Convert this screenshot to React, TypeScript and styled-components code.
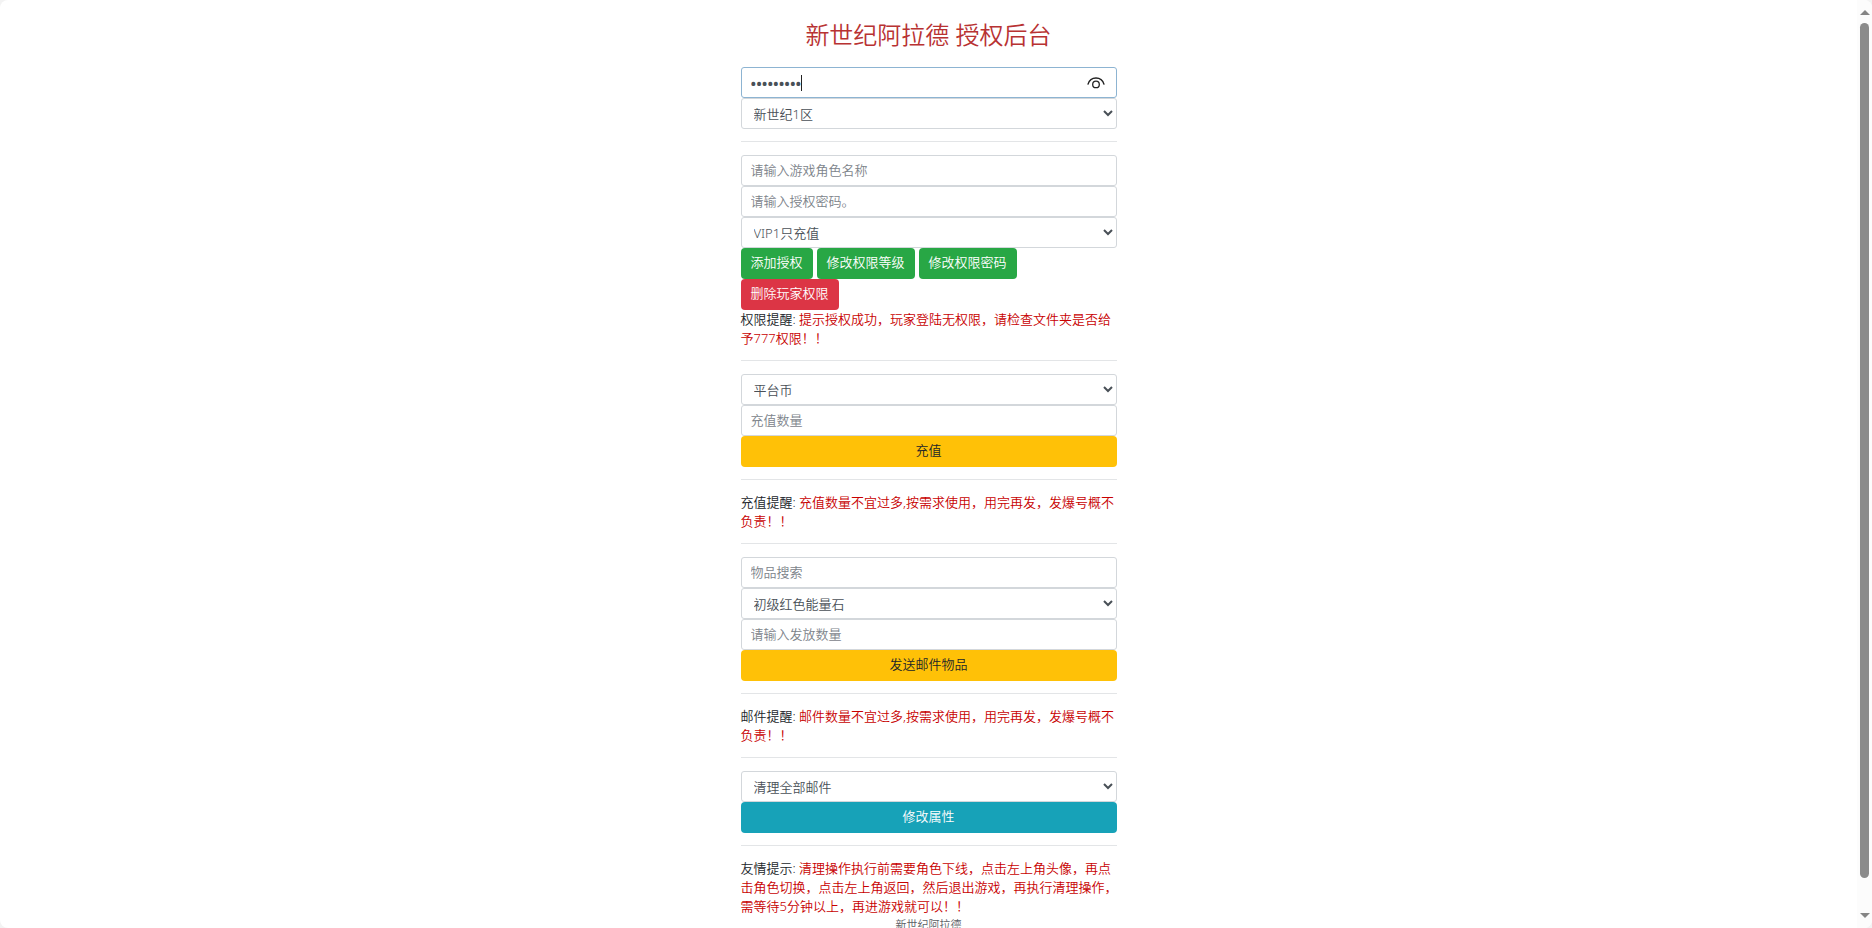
import React, { useState } from "react";
import styled, { createGlobalStyle, css } from "styled-components";

const GlobalStyle = createGlobalStyle`
  *, *::before, *::after { box-sizing: border-box; }
  body {
    margin: 0;
    background: #f3f3f3;
    color: #212529;
    font-family: "Noto Sans", "Noto Sans CJK SC", sans-serif;
    font-size: 13px;
    font-weight: 350;
    line-height: 19px;
  }
`;

const Window = styled.div`
  display: flex;
  height: 100vh;
  overflow: hidden;
  border-radius: 8px;
  background: #fff;
`;

const Scroller = styled.div`
  flex: 1;
  min-width: 0;
  overflow-y: auto;
  scrollbar-width: none;
`;

const Rail = styled.div`
  display: flex;
  flex-direction: column;
  align-items: center;
  justify-content: space-between;
  width: 15px;
  padding: 10px 0;
  background: #fcfcfc;
`;

const Thumb = styled.div`
  flex: 1;
  width: 9px;
  margin: 8px 0 35px;
  border-radius: 5px;
  background: #8b8b8b;
`;

const Page = styled.main`
  max-width: 376px;
  margin: 0 auto;
  padding-top: 16px;
`;

const Title = styled.h1`
  margin: 0 0 13px;
  color: #b83232;
  font-size: 24px;
  font-weight: 350;
  line-height: 38px;
  text-align: center;
`;

const Divider = styled.hr`
  height: 1px;
  margin: 12px 0 13px;
  border: 0;
  background: #e3e5e7;
`;

const control = css`
  display: block;
  width: 100%;
  height: 31px;
  margin: 0;
  border: 1px solid #d3d7db;
  border-radius: 3px;
  background: #fff;
  color: #495057;
  font: inherit;
  outline: none;
`;

const TextInput = styled.input`
  ${control}
  padding: 0 9px 2px;
  &::placeholder { color: #7c838a; opacity: 1; }
`;

const PasswordInput = styled(TextInput)`
  padding: 0 36px 0 9px;
  border-color: #8db4d2;
  font-size: 15px;
  font-weight: 600;
  caret-color: transparent;
`;

const Caret = styled.span`
  position: absolute;
  top: 8px;
  left: 60px;
  width: 1px;
  height: 16px;
  background: #222;
`;

const Select = styled.select`
  ${control}
  padding: 0 0 0 8px;
`;

const PasswordField = styled.div`
  position: relative;
`;

const RevealButton = styled.button`
  position: absolute;
  top: 5px;
  right: 10px;
  display: flex;
  align-items: center;
  justify-content: center;
  width: 22px;
  height: 21px;
  padding: 0;
  border: 0;
  background: none;
  color: #222;
`;

const tones = {
  success: ["#28a745", "#fff"],
  danger: ["#dc3545", "#fff"],
  warning: ["#ffc107", "#212529"],
  info: ["#17a2b8", "#fff"],
};

const Button = styled.button<{ $tone: keyof typeof tones; $block?: boolean }>`
  display: block;
  width: ${(p) => (p.$block ? "100%" : "auto")};
  height: 31px;
  padding: 0 10px 2px;
  border: 0;
  border-radius: 4px;
  background: ${(p) => tones[p.$tone][0]};
  color: ${(p) => tones[p.$tone][1]};
  font: inherit;
`;

const ButtonRow = styled.div`
  display: flex;
  flex-wrap: wrap;
  column-gap: 4px;
`;

const Note = styled.p`
  margin: 0 -4px 0 0;
`;

const Warning = styled.span`
  color: #c80000;
`;

const Footer = styled.footer`
  color: #5c6166;
  font-size: 11px;
  line-height: 17px;
  text-align: center;
`;

const EyeIcon = () => (
  <svg width="18" height="12" viewBox="0 0 18 12" fill="none" stroke="currentColor" strokeWidth="1.3" strokeLinecap="round">
    <path d="M1 7.200C2.200 3.200 5.200 1 9 1s6.800 2.200 8 6.200" />
    <circle cx="9" cy="7.400" r="3.300" />
  </svg>
);

const Arrow = ({ down }: { down?: boolean }) => (
  <svg width="10" height="5" viewBox="0 0 10 5" fill="#858585">
    <path d={down ? "M0 0h10L5 5z" : "M0 5h10L5 0z"} />
  </svg>
);

export default function App() {
  const [password, setPassword] = useState("123456789");
  const [revealed, setRevealed] = useState(false);

  return (
    <>
      <GlobalStyle />
      <Window>
        <Scroller>
          <Page>
            <Title>新世纪阿拉德 授权后台</Title>
            <PasswordField>
              <PasswordInput
                type={revealed ? "text" : "password"}
                aria-label="密码"
                value={password}
                onChange={(e) => setPassword(e.target.value)}
              />
              <Caret aria-hidden="true" />
              <RevealButton type="button" aria-label="显示密码" onClick={() => setRevealed(!revealed)}>
                <EyeIcon />
              </RevealButton>
            </PasswordField>
            <Select aria-label="选区"><option>新世纪1区</option></Select>
            <Divider />
            <TextInput aria-label="角色名称" placeholder="请输入游戏角色名称" />
            <TextInput aria-label="授权密码" placeholder="请输入授权密码。" />
            <Select aria-label="权限等级"><option>VIP1只充值</option></Select>
            <ButtonRow>
              <Button $tone="success">添加授权</Button>
              <Button $tone="success">修改权限等级</Button>
              <Button $tone="success">修改权限密码</Button>
              <Button $tone="danger">删除玩家权限</Button>
            </ButtonRow>
            <Note>权限提醒: <Warning>提示授权成功，玩家登陆无权限，请检查文件夹是否给予777权限！！</Warning></Note>
            <Divider />
            <Select aria-label="充值类型"><option>平台币</option></Select>
            <TextInput aria-label="充值数量" placeholder="充值数量" />
            <Button $tone="warning" $block>充值</Button>
            <Divider />
            <Note>充值提醒: <Warning>充值数量不宜过多,按需求使用，用完再发，发爆号概不负责！！</Warning></Note>
            <Divider />
            <TextInput aria-label="物品搜索" placeholder="物品搜索" />
            <Select aria-label="物品"><option>初级红色能量石</option></Select>
            <TextInput aria-label="发放数量" placeholder="请输入发放数量" />
            <Button $tone="warning" $block>发送邮件物品</Button>
            <Divider />
            <Note>邮件提醒: <Warning>邮件数量不宜过多,按需求使用，用完再发，发爆号概不负责！！</Warning></Note>
            <Divider />
            <Select aria-label="清理类型"><option>清理全部邮件</option></Select>
            <Button $tone="info" $block>修改属性</Button>
            <Divider />
            <Note>友情提示: <Warning>清理操作执行前需要角色下线，点击左上角头像，再点击角色切换，点击左上角返回，然后退出游戏，再执行清理操作，需等待5分钟以上，再进游戏就可以！！</Warning></Note>
            <Footer>新世纪阿拉德</Footer>
          </Page>
        </Scroller>
        <Rail aria-hidden="true">
          <Arrow />
          <Thumb />
          <Arrow down />
        </Rail>
      </Window>
    </>
  );
}
